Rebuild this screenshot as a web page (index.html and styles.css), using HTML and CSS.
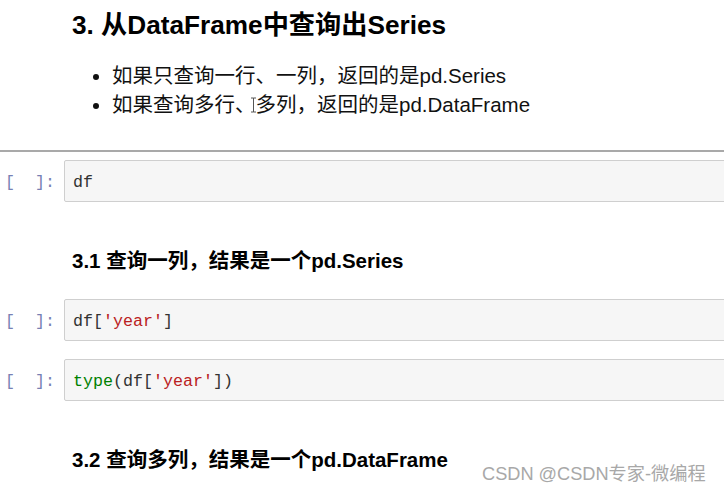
FILE: index.html
```html
<!DOCTYPE html>
<html lang="zh">
<head>
<meta charset="utf-8">
<title>Notebook</title>
<link rel="stylesheet" href="styles.css">
</head>
<body>
<div class="notebook">
  <div class="md">
    <h2 class="h-main">3. 从DataFrame中查询出Series</h2>
    <ul class="bullets">
      <li>如果只查询一行、一列，返回的是pd.Series</li>
      <li class="with-cursor">如果查询多行、多列，返回的是pd.DataFrame<svg class="ibeam" width="7" height="16" viewBox="0 0 7 16"><path d="M1 1h2.5M3.5 1h2.5M3.5 1v14M1 15h2.5M3.5 15h2.5" stroke="#555" stroke-width="1" fill="none"/></svg></li>
    </ul>
  </div>
  <div class="divider"></div>
  <div class="cell first">
    <div class="prompt">[&nbsp;&nbsp;]:</div>
    <div class="input"><span class="n">df</span></div>
  </div>
  <div class="md">
    <h3 class="h-sub sub1">3.1 查询一列，结果是一个pd.Series</h3>
  </div>
  <div class="cell c2">
    <div class="prompt">[&nbsp;&nbsp;]:</div>
    <div class="input"><span class="n">df[</span><span class="s">'year'</span><span class="n">]</span></div>
  </div>
  <div class="cell c3">
    <div class="prompt">[&nbsp;&nbsp;]:</div>
    <div class="input"><span class="b">type</span><span class="n">(df[</span><span class="s">'year'</span><span class="n">])</span></div>
  </div>
  <div class="md">
    <h3 class="h-sub sub2">3.2 查询多列，结果是一个pd.DataFrame</h3>
  </div>
</div>
<div class="watermark">CSDN @CSDN专家-微编程</div>
</body>
</html>
```
FILE: styles.css
```css
html, body {
  margin: 0;
  padding: 0;
  background: #ffffff;
  overflow: hidden;
}
body {
  width: 724px;
  height: 494px;
  position: relative;
  font-family: "Liberation Sans", "Noto Sans CJK SC", sans-serif;
  color: #000;
}
.notebook {
  width: 760px;
}
.md {
  padding-left: 72px;
}
.h-main {
  margin: 9px 0 0;
  font-size: 26.2px;
  line-height: 32px;
  font-weight: bold;
  color: #000;
}
.bullets {
  margin: 20px 0 0;
  padding-left: 40px;
  font-size: 20.5px;
  line-height: 29px;
  color: #111;
}
.with-cursor {
  position: relative;
}
.ibeam {
  position: absolute;
  left: 138px;
  top: 7px;
}
.divider {
  margin-top: 31px;
  height: 0;
  border-top: 2px solid #a9a9a9;
}
.cell {
  display: flex;
  align-items: center;
}
.cell.first { margin-top: 8px; }
.cell.c2 { margin-top: 25px; }
.cell.c3 { margin-top: 18px; }
.prompt {
  width: 55px;
  padding-right: 9px;
  padding-top: 2px;
  text-align: right;
  font-family: "Liberation Mono", monospace;
  font-size: 16.67px;
  color: #7880b4;
  white-space: nowrap;
}
.input {
  flex: 1;
  height: 40px;
  line-height: 43px;
  padding: 0 8px;
  background: #f6f6f6;
  border: 1px solid #cfcfcf;
  border-radius: 2px;
  font-family: "Liberation Mono", "Noto Sans CJK SC", monospace;
  font-size: 16.67px;
  white-space: pre;
}
.n { color: #333; }
.s { color: #ba2121; }
.b { color: #008000; }
.h-sub {
  margin: 0;
  font-size: 20.5px;
  line-height: 26px;
  font-weight: bold;
  color: #000;
}
.sub1 { margin-top: 46px; }
.sub2 { margin-top: 46px; }
.watermark {
  position: absolute;
  left: 482px;
  top: 462px;
  font-size: 18.2px;
  line-height: 24px;
  color: #a8a8a8;
  white-space: nowrap;
  text-shadow: 0 0 1px #fff;
}
```
